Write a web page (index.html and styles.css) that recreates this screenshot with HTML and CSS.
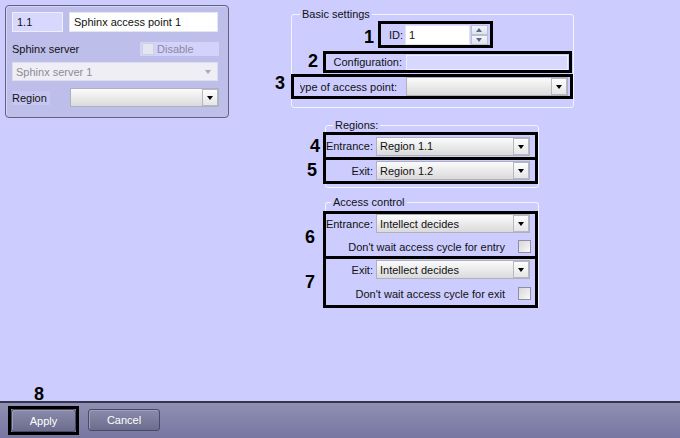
FILE: index.html
```html
<!DOCTYPE html>
<html lang="en">
<head>
    <meta charset="UTF-8">
    <meta name="viewport" content="width=device-width, initial-scale=1.0">
    <title>Sphinx access point</title>
    <link rel="stylesheet" href="styles.css">
</head>
<body>
    <div class="window">
        <div class="main">
            <div class="card">
                <div class="card-row">
                    <div class="field field-code">1.1</div>
                    <div class="field field-name">Sphinx access point 1</div>
                </div>
                <div class="card-row server-row">
                    <span>Sphinx server</span>
                    <div class="disable"><span class="check check-off"></span>Disable</div>
                </div>
                <div class="card-row row-gap">
                    <div class="combo combo-off combo-server"><span class="combo-text">Sphinx server 1</span><span class="arrow-off"></span></div>
                </div>
                <div class="card-row row-gap">
                    <span class="region-lbl">Region</span>
                    <div class="combo combo-region"><span class="combo-text"></span><span class="drop"></span></div>
                </div>
            </div>

            <div class="settings">
                <fieldset class="group group-basic">
                    <legend>Basic settings</legend>
                    <div class="hl row-id">
                        <span class="num num-1">1</span>
                        <span>ID:</span>
                        <div class="input">1</div>
                        <div class="spin"><span class="spin-up"></span><span class="spin-down"></span></div>
                    </div>
                    <div class="hl row-conf">
                        <span class="num num-2">2</span>
                        <div class="lbl lbl-conf"><span>Configuration:</span></div>
                        <div class="field field-conf"></div>
                    </div>
                    <div class="hl row-type">
                        <span class="num num-3">3</span>
                        <div class="lbl lbl-type"><span>Type of access point:</span></div>
                        <div class="combo combo-type"><span class="combo-text"></span><span class="drop"></span></div>
                    </div>
                </fieldset>

                <fieldset class="group group-small group-regions">
                    <legend>Regions:</legend>
                    <div class="hl row-reg">
                        <span class="num num-4">4</span>
                        <div class="lbl lbl-reg"><span>Entrance:</span></div>
                        <div class="combo combo-reg"><span class="combo-text">Region 1.1</span><span class="drop"></span></div>
                    </div>
                    <div class="hl row-reg row-next">
                        <span class="num num-5">5</span>
                        <div class="lbl lbl-reg"><span>Exit:</span></div>
                        <div class="combo combo-reg"><span class="combo-text">Region 1.2</span><span class="drop"></span></div>
                    </div>
                </fieldset>

                <fieldset class="group group-small group-access">
                    <legend>Access control</legend>
                    <div class="hl hl-col row-entry">
                        <span class="num num-6">6</span>
                        <div class="line">
                            <div class="lbl lbl-reg"><span>Entrance:</span></div>
                            <div class="combo combo-reg"><span class="combo-text">Intellect decides</span><span class="drop"></span></div>
                        </div>
                        <div class="check-line">
                            <span>Don't wait access cycle for entry</span>
                            <span class="check"></span>
                        </div>
                    </div>
                    <div class="hl hl-col row-exit">
                        <span class="num num-7">7</span>
                        <div class="line">
                            <div class="lbl lbl-reg"><span>Exit:</span></div>
                            <div class="combo combo-reg"><span class="combo-text">Intellect decides</span><span class="drop"></span></div>
                        </div>
                        <div class="check-line">
                            <span>Don't wait access cycle for exit</span>
                            <span class="check"></span>
                        </div>
                    </div>
                </fieldset>
            </div>
        </div>

        <div class="bar">
            <div class="hl apply-hl">
                <span class="num num-8">8</span>
                <button class="btn btn-apply">Apply</button>
            </div>
            <button class="btn btn-cancel">Cancel</button>
        </div>
    </div>
</body>
</html>
```

FILE: styles.css
```css
* {
    box-sizing: border-box;
}

body {
    margin: 0;
    width: 680px;
    height: 438px;
    overflow: hidden;
    background-color: #ccccfe;
    font-family: "Liberation Sans", Arial, sans-serif;
    font-size: 11px;
    color: #111;
}

.window {
    display: flex;
    flex-direction: column;
    height: 438px;
}

.main {
    flex: 1;
    display: flex;
    align-items: flex-start;
}

/* left card */
.card {
    width: 224px;
    height: 113px;
    margin: 5px 0 0 5px;
    padding: 6px 0 0 6px;
    background-color: #bebeeb;
    border: 1px solid #62627a;
    border-radius: 4px;
    box-shadow: inset 1px 1px 0 #d4d4fa;
}

.card-row {
    display: flex;
    align-items: center;
    width: 206px;
}

.server-row {
    height: 14px;
    margin-top: 10px;
    justify-content: space-between;
}

.row-gap {
    margin-top: 6px;
}

.card-row.row-gap:last-child {
    margin-top: 7px;
}

.field {
    height: 20px;
    display: flex;
    align-items: center;
    padding: 0 4px;
    white-space: nowrap;
    background-color: #d8d8fe;
    border: 1px solid #eeeeff;
}

.field-code {
    width: 51px;
}

.field-name {
    width: 149px;
    margin-left: 6px;
    background-color: #fff;
    border-color: #e6e6f2;
}

.disable {
    display: flex;
    align-items: center;
    width: 79px;
    height: 14px;
    margin-right: -1px;
    padding-left: 2px;
    background-color: #d2d2fb;
    color: #8a8aa4;
}

.disable .check {
    margin-right: 3px;
}

.check {
    display: inline-block;
    flex: none;
    width: 13px;
    height: 13px;
    border: 1px solid #8e8e9c;
    background: linear-gradient(135deg, #d6d6dc, #fafafa);
}

.check-off {
    width: 12px;
    height: 12px;
    border-color: #d0d0de;
    background: #e6e6f0;
}

.region-lbl {
    width: 38px;
    height: 14px;
    line-height: 14px;
    background-color: #c6c6f3;
}

/* combo boxes */
.combo {
    display: flex;
    align-items: center;
    height: 19px;
    padding-left: 3px;
    border: 1px solid #b0b0bc;
    background: linear-gradient(#fbfbfb, #dadada);
    white-space: nowrap;
}

.combo-text {
    flex: 1;
}

.drop {
    position: relative;
    width: 16px;
    height: 17px;
    border: 1px solid #b8b8c4;
    background: linear-gradient(#fdfdfd, #e6e6e6);
}

.drop::after {
    content: "";
    position: absolute;
    left: 4px;
    top: 6px;
    border-left: 3.5px solid transparent;
    border-right: 3.5px solid transparent;
    border-top: 4px solid #000;
}

.combo-off {
    background: #eeeef4;
    border-color: #dedeea;
    color: #8c8c98;
}

.arrow-off {
    width: 16px;
    position: relative;
    height: 17px;
}

.arrow-off::after {
    content: "";
    position: absolute;
    left: 4px;
    top: 7px;
    border-left: 3.5px solid transparent;
    border-right: 3.5px solid transparent;
    border-top: 4px solid #a8a8b4;
}

.combo-server {
    width: 206px;
}

.combo-region {
    width: 149px;
    margin-left: auto;
    margin-right: -1px;
}

/* settings column */
.settings {
    width: 283px;
    margin: 8px 0 0 62px;
}

.group {
    margin: 0;
    padding: 0;
    min-width: 0;
    border: 1px solid #f4f4ff;
    border-radius: 3px;
}

.group legend {
    margin-left: 8px;
    padding: 0 2px;
    line-height: 13px;
}

.group-basic {
    padding-bottom: 8px;
}

.group-small {
    width: 214px;
    margin-left: 34px;
}

.group-regions {
    margin-top: 11px;
    padding-bottom: 3px;
}

.group-regions legend {
    margin-left: 7px;
}

.group-access {
    margin-top: 8px;
    border-bottom: none;
}

.group-access legend {
    margin-left: 5px;
}

/* highlighted rows */
.hl {
    position: relative;
    display: flex;
    align-items: center;
    border: 3px solid #000;
}

.hl-col {
    flex-direction: column;
    align-items: stretch;
}

.num {
    position: absolute;
    width: 10px;
    font-size: 18px;
    line-height: 18px;
    font-weight: bold;
    color: #000;
}

.num-1 { left: -17px; top: 4px; }
.num-2 { left: -18px; top: -2px; }
.num-3 { left: -19px; top: -3px; }
.num-4 { left: -16px; top: 2px; }
.num-5 { left: -19px; top: 1px; }
.num-6 { left: -21px; top: 14px; }
.num-7 { left: -21px; top: 14px; }
.num-8 { left: 23px; top: -24px; }

.lbl {
    display: flex;
    justify-content: flex-end;
    flex: none;
    overflow: hidden;
    white-space: nowrap;
}

.row-id {
    width: 115px;
    height: 27px;
    margin-left: 86px;
    padding-left: 8px;
}

.input {
    width: 65px;
    height: 20px;
    margin-left: 2px;
    padding-left: 3px;
    line-height: 18px;
    background-color: #fff;
    border: 1px solid #e2e2ee;
}

.spin {
    display: flex;
    flex-direction: column;
    width: 17px;
    height: 20px;
    margin-left: 1px;
}

.spin span {
    position: relative;
    flex: 1;
    border: 1px solid #b8c0d2;
    background: linear-gradient(#f4f6fa, #dde2ec);
}

.spin span::after {
    content: "";
    position: absolute;
    left: 4px;
    top: 2px;
    border-left: 3.5px solid transparent;
    border-right: 3.5px solid transparent;
}

.spin-up::after {
    border-bottom: 4px solid #5a6a8a;
}

.spin-down::after {
    border-top: 4px solid #5a6a8a;
}

.row-conf {
    width: 249px;
    height: 22px;
    margin: 3px 0 0 31px;
}

.lbl-conf {
    width: 76px;
}

.field-conf {
    width: 162px;
    height: 15px;
    margin-left: 4px;
}

.row-type {
    width: 282px;
    height: 25px;
    margin: 1px 0 0 -1px;
    padding-left: 6px;
}

.lbl-type {
    width: 97px;
}

.combo-type {
    width: 162px;
    margin-left: 9px;
}

.row-reg {
    width: 215px;
    height: 28px;
    margin-left: -3px;
}

.row-next {
    height: 27px;
    margin-top: -3px;
}

.lbl-reg {
    width: 47px;
}

.combo-reg {
    width: 154px;
    margin-left: 3px;
}

.line {
    display: flex;
    align-items: center;
}

.check-line {
    display: flex;
    align-items: center;
    justify-content: flex-end;
    gap: 13px;
    height: 13px;
    padding-right: 4px;
}

.row-entry {
    width: 215px;
    height: 48px;
    margin: 2px 0 0 -3px;
}

.row-entry .check-line {
    margin-top: 7px;
}

.row-exit {
    width: 215px;
    height: 52px;
    margin: -3px 0 0 -3px;
}

.row-exit .line {
    margin-top: 1px;
}

.row-exit .check-line {
    margin-top: 8px;
}

/* bottom bar */
.bar {
    display: flex;
    align-items: flex-start;
    height: 37px;
    padding: 3px 0 0 8px;
    border-top: 2px solid #35354d;
    background: linear-gradient(#9090b2, #7676a2);
}

.btn {
    font-family: "Liberation Sans", Arial, sans-serif;
    font-size: 11px;
    color: #fff;
    border: 1px solid #4a4a64;
    border-radius: 3px;
    background: linear-gradient(#8a8aaa, #6c6c8e);
    box-shadow: inset 1px 1px 0 #9c9cbc;
    padding: 0;
}

.btn-apply {
    display: block;
    width: 65px;
    height: 23px;
}

.btn-cancel {
    width: 72px;
    height: 22px;
    margin: 3px 0 0 9px;
}
```
